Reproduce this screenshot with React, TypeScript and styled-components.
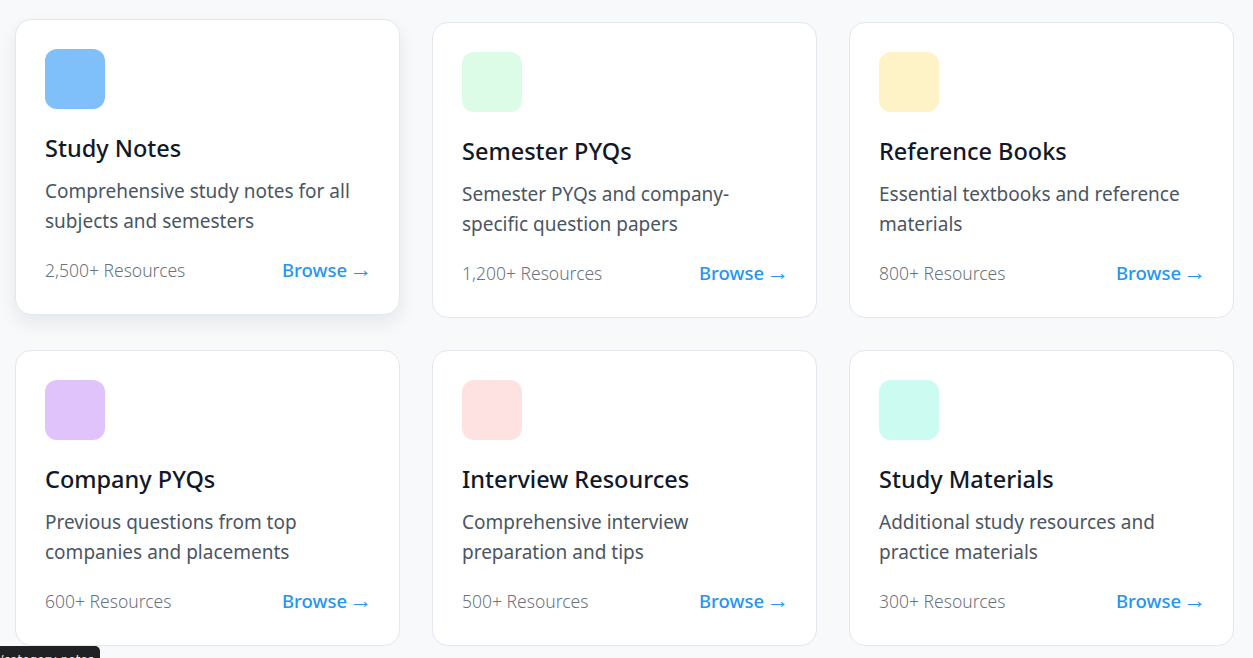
import React from "react";
import styled, { createGlobalStyle } from "styled-components";

const GlobalStyle = createGlobalStyle`
  html, body {
    margin: 0;
    padding: 0;
    background: #f8f9fb;
    font-family: "Noto Sans", "Open Sans", sans-serif;
  }
  * { box-sizing: border-box; }
`;

const Page = styled.main`
  padding: 22px 19px 0 15px;
`;

const Grid = styled.div`
  display: grid;
  grid-template-columns: repeat(3, 1fr);
  column-gap: 32px;
  row-gap: 32px;
`;

const Card = styled.article<{ $raised?: boolean }>`
  display: flex;
  flex-direction: column;
  height: 296px;
  padding: 29px 29px 0 29px;
  background: #ffffff;
  border: 1px solid #e3e7ee;
  border-radius: 16px;
  transform: ${(p) => (p.$raised ? "translateY(-3px)" : "none")};
  box-shadow: ${(p) =>
    p.$raised ? "0 8px 18px rgba(15, 23, 42, 0.08)" : "none"};
`;

const IconTile = styled.div<{ $color: string }>`
  width: 60px;
  height: 60px;
  border-radius: 12px;
  background: ${(p) => p.$color};
  margin-bottom: 22px;
`;

const Title = styled.h3`
  margin: 0 0 11px 0;
  font-size: 23.5px;
  line-height: 34px;
  font-weight: 500;
  color: #111827;
`;

const Description = styled.p`
  margin: 0;
  font-size: 19px;
  line-height: 30px;
  font-weight: 400;
  color: #4b5563;
`;

const Footer = styled.div`
  display: flex;
  align-items: center;
  justify-content: space-between;
  margin-top: 21px;
`;

const Count = styled.span`
  font-size: 17.5px;
  font-weight: 300;
  color: #6b7280;
`;

const Browse = styled.a`
  display: flex;
  align-items: center;
  gap: 2px;
  margin-right: -2px;
  font-size: 18.5px;
  font-weight: 500;
  color: #2196f3;
  text-decoration: none;
  cursor: pointer;
`;

const Arrow = styled.span`
  font-family: "Liberation Sans", sans-serif;
  font-weight: 400;
  font-size: 23px;
  line-height: 1;
`;

const StatusBar = styled.div`
  position: fixed;
  left: 0;
  top: 646px;
  width: 100px;
  height: 24px;
  padding: 7px 6px 0 6px;
  background: #202124;
  border-top-right-radius: 5px;
  color: #e8eaed;
  font-family: "DejaVu Sans", sans-serif;
  font-size: 12px;
  line-height: 14px;
  display: flex;
  justify-content: flex-end;
  overflow: hidden;
  white-space: nowrap;
`;

type Category = {
  title: string;
  description: string;
  count: string;
  color: string;
};

const categories: Category[] = [
  {
    title: "Study Notes",
    description: "Comprehensive study notes for all subjects and semesters",
    count: "2,500+ Resources",
    color: "#7fbffa",
  },
  {
    title: "Semester PYQs",
    description: "Semester PYQs and company-specific question papers",
    count: "1,200+ Resources",
    color: "#dcfce7",
  },
  {
    title: "Reference Books",
    description: "Essential textbooks and reference materials",
    count: "800+ Resources",
    color: "#fef3c7",
  },
  {
    title: "Company PYQs",
    description: "Previous questions from top companies and placements",
    count: "600+ Resources",
    color: "#e0c3fb",
  },
  {
    title: "Interview Resources",
    description: "Comprehensive interview preparation and tips",
    count: "500+ Resources",
    color: "#fee2e2",
  },
  {
    title: "Study Materials",
    description: "Additional study resources and practice materials",
    count: "300+ Resources",
    color: "#ccfbf1",
  },
];

export default function App() {
  return (
    <>
      <GlobalStyle />
      <Page>
        <Grid>
          {categories.map((c, i) => (
            <Card key={c.title} $raised={i === 0}>
              <IconTile $color={c.color} />
              <Title>{c.title}</Title>
              <Description>{c.description}</Description>
              <Footer>
                <Count>{c.count}</Count>
                <Browse>
                  Browse <Arrow>→</Arrow>
                </Browse>
              </Footer>
            </Card>
          ))}
        </Grid>
      </Page>
      <StatusBar>
        <span>localhost/category-notes</span>
      </StatusBar>
    </>
  );
}
